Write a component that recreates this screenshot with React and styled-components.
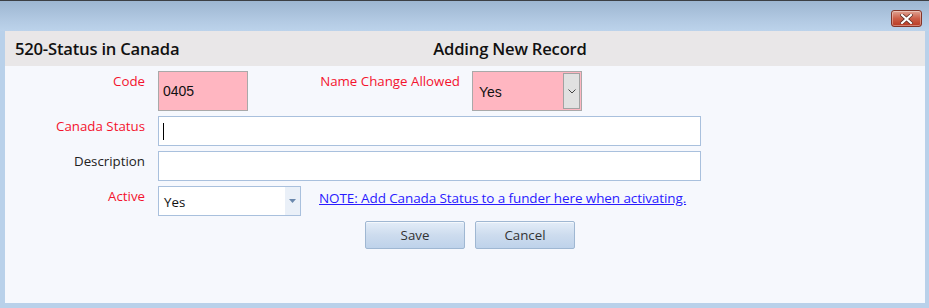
import React from "react";
import styled, { createGlobalStyle } from "styled-components";

const Global = createGlobalStyle`
  html, body { margin: 0; padding: 0; background: #b9d1ea; }
  body { font-family: "Open Sans", "Noto Sans", sans-serif; }
`;

const Window = styled.div`
  width: 929px;
  height: 308px;
  display: flex;
  flex-direction: column;
  background: #b9d1ea;
  border-top: 1px solid #3c3f44;
  box-sizing: border-box;
`;

const TitleBar = styled.div`
  height: 30px;
  flex: none;
  display: flex;
  justify-content: flex-end;
  align-items: flex-start;
  padding: 9px 7px 0 0;
  box-sizing: border-box;
  background: linear-gradient(#9db6d1, #b4cbe4 70%, #bcd3eb);
`;

const CloseButton = styled.div`
  width: 31px;
  height: 17px;
  box-sizing: border-box;
  border: 1px solid #833428;
  border-radius: 3px;
  background: linear-gradient(#e0a393, #cc5e48 50%, #b93a23);
  box-shadow: inset 0 0 0 1px rgba(255, 255, 255, 0.35);
  display: flex;
  align-items: center;
  justify-content: center;
`;

const Frame = styled.div`
  flex: 1;
  display: flex;
  padding: 0 4px 5px 5px;
`;

const Panel = styled.div`
  flex: 1;
  background: #f6f8fd;
  display: flex;
  flex-direction: column;
`;

const Header = styled.div`
  height: 35px;
  display: grid;
  grid-template-columns: 1fr auto 1fr;
  align-items: center;
  background: #e9e7e8;
  padding: 0 10px;
  font-family: "Open Sans", sans-serif;
  font-weight: 600;
  font-size: 16.6px;
  color: #111;
  letter-spacing: -0.2px;
`;

const HeaderCenter = styled.div`
  transform: translateX(45px);
`;

const Form = styled.div`
  display: flex;
  flex-direction: column;
  padding-top: 5px;
`;

const Row = styled.div`
  display: flex;
  align-items: flex-start;
  margin-top: ${p => p.gap || 0}px;
`;

const Label = styled.div`
  width: ${p => p.width || 140}px;
  margin-left: ${p => p.offset || 0}px;
  margin-right: ${p => p.space || 13}px;
  flex: none;
  text-align: right;
  line-height: 20px;
  font-size: 13.3px;
  color: ${p => (p.required ? "#f4142e" : "#222")};
`;

const TextBox = styled.div`
  width: ${p => p.width}px;
  height: ${p => p.height || 30}px;
  box-sizing: border-box;
  border: 1px solid ${p => (p.pink ? "#a9a9a9" : "#a9c0dd")};
  background: ${p => (p.pink ? "#ffb6c1" : "#fff")};
  display: flex;
  align-items: center;
  padding-left: 4px;
  font-family: "Liberation Sans", Arial, sans-serif;
  font-size: 14px;
  color: #111;
`;

const Caret = styled.span`
  width: 1px;
  height: 17px;
  background: #000;
`;

const PinkSelect = styled.div`
  width: 110px;
  height: 40px;
  box-sizing: border-box;
  border: 1px solid #a9a9a9;
  background: #ffb6c1;
  display: flex;
  align-items: stretch;
  padding: 1px;
  font-family: "Liberation Sans", Arial, sans-serif;
  font-size: 14px;
  color: #111;
`;

const SelectText = styled.div`
  flex: 1;
  display: flex;
  align-items: center;
  padding-left: ${p => p.pad || 5}px;
  padding-top: 2px;
`;

const GrayDrop = styled.div`
  width: 17px;
  box-sizing: border-box;
  border: 1px solid #a2a2a2;
  background: #e1e1e1;
  display: flex;
  align-items: center;
  justify-content: center;
`;

const ComboBox = styled.div`
  width: 143px;
  height: 30px;
  box-sizing: border-box;
  border: 1px solid #a9c0dd;
  background: #fff;
  display: flex;
  align-items: stretch;
  font-size: 13.3px;
  color: #111;
`;

const ComboDrop = styled.div`
  width: 15px;
  background: #eaf0f8;
  display: flex;
  align-items: center;
  justify-content: center;
`;

const NoteLink = styled.a`
  margin-left: 18px;
  line-height: 24px;
  font-size: 13.5px;
  color: #2a1bff;
  text-decoration: underline;
  letter-spacing: -0.1px;
`;

const Buttons = styled.div`
  display: flex;
  gap: 10px;
  margin-top: 5px;
  padding-left: 360px;
`;

const Button = styled.div`
  width: 100px;
  height: 28px;
  box-sizing: border-box;
  border: 1px solid #9fb7d2;
  border-radius: 2px;
  background: linear-gradient(#e3edf8, #cddcee 50%, #bed2ea);
  box-shadow: inset 0 1px 0 #f4f8fc;
  display: flex;
  align-items: center;
  justify-content: center;
  font-size: 13.3px;
  color: #333;
`;

export default function App() {
  return (
    <>
      <Global />
      <Window>
        <TitleBar>
          <CloseButton>
            <svg width="13" height="10" viewBox="0 0 13 10">
              <path d="M2 1 L11 9 M11 1 L2 9" stroke="#5a2a22" strokeWidth="3.6" strokeLinecap="square" />
              <path d="M2 1 L11 9 M11 1 L2 9" stroke="#fff" strokeWidth="2.2" strokeLinecap="square" />
            </svg>
          </CloseButton>
        </TitleBar>
        <Frame>
          <Panel>
            <Header>
              <div>520-Status in Canada</div>
              <HeaderCenter>Adding New Record</HeaderCenter>
              <div />
            </Header>
            <Form>
              <Row>
                <Label required>Code</Label>
                <TextBox pink width={90} height={40}>0405</TextBox>
                <Label required width={150} offset={62} space={12}>Name Change Allowed</Label>
                <PinkSelect>
                  <SelectText>Yes</SelectText>
                  <GrayDrop>
                    <svg width="8" height="5" viewBox="0 0 8 5">
                      <path d="M0.5 0.5 L4 4 L7.5 0.5" fill="none" stroke="#444" strokeWidth="1" />
                    </svg>
                  </GrayDrop>
                </PinkSelect>
              </Row>
              <Row gap={5}>
                <Label required>Canada Status</Label>
                <TextBox width={543}>
                  <Caret />
                </TextBox>
              </Row>
              <Row gap={5}>
                <Label>Description</Label>
                <TextBox width={543} />
              </Row>
              <Row gap={5}>
                <Label required>Active</Label>
                <ComboBox>
                  <SelectText pad={5}>Yes</SelectText>
                  <ComboDrop>
                    <svg width="7" height="4" viewBox="0 0 7 4">
                      <path d="M0 0 H7 L3.5 4 Z" fill="#6a88ad" />
                    </svg>
                  </ComboDrop>
                </ComboBox>
                <NoteLink href="#">NOTE: Add Canada Status to a funder here when activating.</NoteLink>
              </Row>
              <Buttons>
                <Button>Save</Button>
                <Button>Cancel</Button>
              </Buttons>
            </Form>
          </Panel>
        </Frame>
      </Window>
    </>
  );
}
